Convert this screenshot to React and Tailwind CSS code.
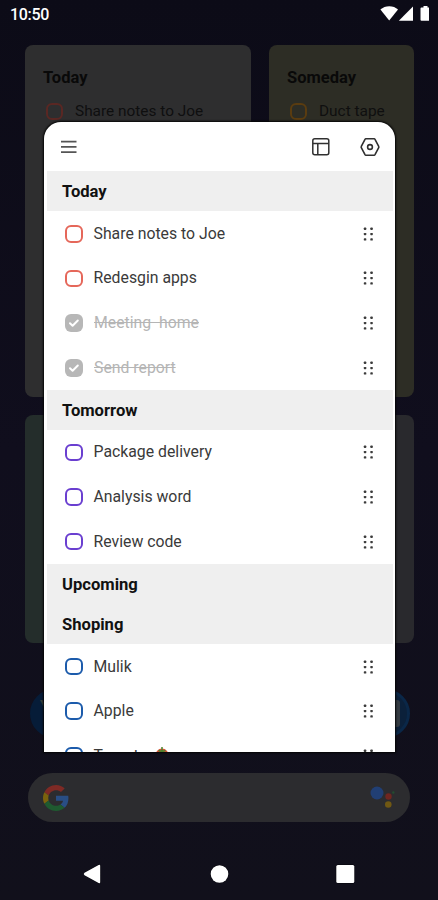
import React from "react";

const groups = [
  {
    title: "Today",
    color: "border-[#e5675a]",
    items: [
      { text: "Share notes to Joe" },
      { text: "Redesgin apps" },
      { text: "Meeting  home", done: true },
      { text: "Send report", done: true },
    ],
  },
  {
    title: "Tomorrow",
    color: "border-[#6a3fd0]",
    items: [
      { text: "Package delivery" },
      { text: "Analysis word" },
      { text: "Review code" },
    ],
  },
  { title: "Upcoming", items: [] },
  {
    title: "Shoping",
    color: "border-[#1c5bab]",
    items: [{ text: "Mulik" }, { text: "Apple" }, { text: "Tomato", tomato: true }],
  },
];

const StatusBar = () => (
  <div className="flex h-[45px] items-start justify-between pl-[10px] pr-[8px] pt-[5px] text-white">
    <span className="text-[16px] leading-[19px] font-medium tracking-[-0.3px]">10:50</span>
    <svg width="50" height="18" viewBox="0 0 50 18" fill="currentColor">
      <path d="M.4 4.600C5 .1 13.600.1 18 4.600L9.200 15.600Z" />
      <path d="M33 1.500V15.800H18.800Z" />
      <path d="M42 2.400h1.500V1h4v1.400H49v13.400h-7.500a1 1 0 0 1-1-1V3.400a1 1 0 0 1 1-1Z" />
    </svg>
  </div>
);

const WidgetItem = ({ text, color }) => (
  <div className="flex h-[37px] items-center gap-[12px]">
    <span className={`size-[17px] shrink-0 rounded-[6px] border-2 ${color}`} />
    <span className="whitespace-nowrap text-[15.4px] text-[#0f0f0f]">{text}</span>
  </div>
);

const HomeScreen = () => (
  <div className="flex flex-1 flex-col">
    <div className="flex h-[352px] gap-[18px] pl-[25px] pr-[24px]">
      <div className="w-[226px] rounded-[8px] bg-[#2e2e2f] pl-[18px] pt-[22px]">
        <h3 className="text-[16.500px] leading-[22px] font-bold text-[#090909]">Today</h3>
        <div className="mt-[4px] pl-[3px]">
          <WidgetItem text="Share notes to Joe" color="border-[#5a2723]" />
        </div>
      </div>
      <div className="flex-1 rounded-[8px] bg-[#2d2d25] pl-[18px] pt-[22px]">
        <h3 className="text-[16.500px] leading-[22px] font-bold text-[#090909]">Someday</h3>
        <div className="mt-[4px] pl-[3px]">
          <WidgetItem text="Duct tape" color="border-[#5a3c10]" />
        </div>
      </div>
    </div>
    <div className="mt-[18px] flex h-[228px] pl-[25px] pr-[24px]">
      <div className="flex-1 rounded-l-[8px] bg-[#242d2b]" />
      <div className="flex-1 rounded-r-[8px] bg-[#29292d]" />
    </div>
    <div className="mt-[45px] flex h-[50px] items-center justify-between pl-[30px] pr-[28px]">
      <div className="size-[49px] rounded-full bg-[#061c38] pl-[10px] pt-[6px] text-[15px] font-bold text-[#3a413e]">
        Y
      </div>
      <div className="flex size-[49px] items-center justify-center rounded-full border-[3px] border-[#0a2748] bg-[#0b203a]">
        <div className="h-[27px] w-[29px] rounded-[3px] bg-[#343b42]" />
      </div>
    </div>
    <div className="mx-[28px] mt-[35px] flex h-[49px] items-center justify-between rounded-full bg-[#2c2c2f] pl-[15px] pr-[14px]">
      <svg width="26" height="26" viewBox="0 0 48 48">
        <path fill="#7e2a25" d="M24 9.500c3.540 0 6.710 1.220 9.210 3.600l6.850-6.850C35.900 2.380 30.470 0 24 0 14.620 0 6.510 5.380 2.560 13.220l7.980 6.190C12.430 13.720 17.740 9.500 24 9.500z" />
        <path fill="#294e84" d="M46.980 24.550c0-1.570-.15-3.090-.38-4.550H24v9.020h12.940c-.58 2.960-2.260 5.480-4.780 7.180l7.730 6c4.510-4.180 7.090-10.360 7.090-17.650z" />
        <path fill="#7b620d" d="M10.530 28.590c-.48-1.450-.76-2.990-.76-4.590s.27-3.140.76-4.590l-7.980-6.190C.92 16.460 0 20.120 0 24c0 3.880.92 7.540 2.560 10.780l7.970-6.190z" />
        <path fill="#1f5a30" d="M24 48c6.480 0 11.930-2.130 15.890-5.810l-7.730-6c-2.150 1.450-4.920 2.300-8.160 2.300-6.260 0-11.570-4.220-13.470-9.910l-7.980 6.190C6.510 42.620 14.620 48 24 48z" />
      </svg>
      <svg width="27" height="27" viewBox="0 0 27 27">
        <circle cx="8" cy="9" r="6.500" fill="#213f74" />
        <circle cx="19.500" cy="12.500" r="3.200" fill="#702620" />
        <circle cx="19.300" cy="20.500" r="3.300" fill="#705813" />
        <circle cx="24.300" cy="8.500" r="1.200" fill="#234d30" />
      </svg>
    </div>
  </div>
);

const NavBar = () => (
  <div className="flex h-[52px] items-start pl-[82px] pt-[15px] text-white">
    <svg width="274" height="22" viewBox="0 0 274 22" fill="currentColor" stroke="#05050b" strokeWidth="1" paintOrder="stroke">
      <path d="M2.500 9.800 16.600 1.900q1.600-.8 1.600.8v16.600q0 1.600-1.600.8L2.500 12.200q-1.600-1.200 0-2.400Z" />
      <circle cx="137.500" cy="11" r="8.800" />
      <rect x="254.300" y="2" width="18" height="18" rx="1.500" />
    </svg>
  </div>
);

const DragHandle = () => (
  <svg width="12" height="16" viewBox="0 0 12 16" fill="#3b3b3b">
    {[2.8, 8.1, 13.4].map((y) => (
      <g key={y}>
        <rect x="0.800" y={y - 1.2} width="2.500" height="2.400" rx="0.700" />
        <rect x="7.300" y={y - 1.2} width="2.500" height="2.400" rx="0.700" />
      </g>
    ))}
  </svg>
);

const TomatoIcon = () => (
  <svg width="14" height="18" viewBox="0 0 14 18" className="ml-[7px] shrink-0">
    <ellipse cx="7" cy="9" rx="6.800" ry="7.500" fill="#d95034" />
    <path d="M7 0v4M3.500 3.500 7 4.500l3.500-1" stroke="#4c842d" strokeWidth="1.500" fill="none" />
  </svg>
);

const TodoItem = ({ item, color }) => (
  <div className="flex h-[44.6px] shrink-0 items-center pl-[21px] pr-[20px]">
    {item.done ? (
      <span className="flex size-[18px] shrink-0 items-center justify-center rounded-[6px] bg-[#b7b7b7]">
        <svg width="12" height="12" viewBox="0 0 12 12" fill="none" stroke="white" strokeWidth="2">
          <path d="m2 6.200 2.600 2.500 5.200-5.200" strokeLinecap="round" strokeLinejoin="round" />
        </svg>
      </span>
    ) : (
      <span className={`size-[17.500px] shrink-0 rounded-[6px] border-2 ${color}`} />
    )}
    <span
      className={`ml-[11px] whitespace-pre text-[15.8px] leading-[22px] ${
        item.done ? "text-[#b5b5b5] line-through" : "text-[#3a3a3a]"
      }`}
    >
      {item.text}
    </span>
    {item.tomato && <TomatoIcon />}
    <span className="ml-auto">
      <DragHandle />
    </span>
  </div>
);

const TodoDialog = () => (
  <div className="absolute left-[44px] top-[122px] flex h-[630px] w-[350.500px] flex-col overflow-hidden rounded-t-[17px] bg-white shadow-[0_0_2px_1px_#050505]">
    {/* Toolbar */}
    <div className="flex h-[49.300px] shrink-0 items-center pl-[16px] pr-[14px] pt-[1px]">
      <svg width="18" height="18" viewBox="0 0 18 18" stroke="#555555" strokeWidth="1.700">
        <path d="M1 3.600h15.500M1 8.900h15.500M1 14.200h15.500" />
      </svg>
      <svg width="20" height="20" viewBox="0 0 20 20" fill="none" stroke="#303030" strokeWidth="1.500" className="ml-auto">
        <rect x="1.800" y="1.800" width="16" height="16" rx="2" />
        <path d="M2 6.500h16M6.800 6.500v11" />
      </svg>
      <svg width="22" height="20" viewBox="0 0 22 20" fill="none" stroke="#303030" strokeWidth="1.600" className="ml-[28px]">
        <path d="M6.800 1.800h8.400q.5 0 .8.500l3.700 7q.4.700 0 1.400l-3.700 7q-.3.500-.8.500H6.800q-.5 0-.8-.5l-3.700-7q-.4-.7 0-1.400l3.700-7q.3-.5.8-.5Z" strokeLinejoin="round" />
        <circle cx="11" cy="10" r="2.400" />
      </svg>
    </div>
    {groups.map((group) => (
      <React.Fragment key={group.title}>
        <h2 className="ml-[3px] mr-[2px] flex h-[40.200px] shrink-0 items-center bg-[#efefef] pl-[15px] pt-[3px] text-[16.600px] font-bold text-[#111111]">
          {group.title}
        </h2>
        {group.items.map((item) => (
          <TodoItem key={item.text} item={item} color={group.color} />
        ))}
      </React.Fragment>
    ))}
  </div>
);

export default function App() {
  return (
    <div className="relative flex h-[900px] w-[438px] flex-col overflow-hidden bg-gradient-to-b from-[#0c0b17] via-[#100e1d] to-[#11101b] font-['Roboto',sans-serif]">
      <StatusBar />
      <HomeScreen />
      <NavBar />
      <TodoDialog />
    </div>
  );
}
